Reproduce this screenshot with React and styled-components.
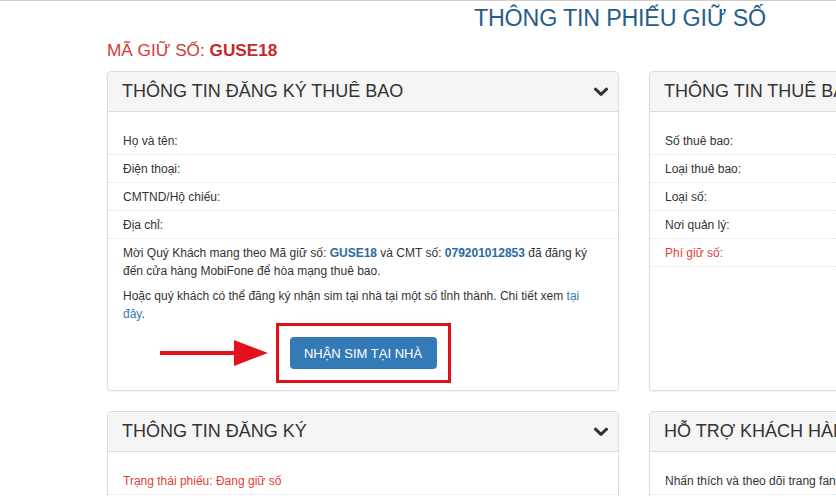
import React from "react";
import styled, { createGlobalStyle } from "styled-components";

const Global = createGlobalStyle`
  html, body { margin: 0; padding: 0; background: #fff; }
  body {
    font-family: "Liberation Sans", Arial, sans-serif;
    color: #333;
    overflow: hidden;
    width: 836px;
    height: 496px;
    border-top: 1px solid #cfcfcf;
    box-sizing: border-box;
  }
`;

const Page = styled.div`
  padding-left: 107px;
  width: 1200px;
`;

const Title = styled.h1`
  margin: 0;
  width: 1026px;
  padding-top: 4px;
  text-align: center;
  font-size: 23.3px;
  font-weight: normal;
  color: #255d8c;
  line-height: 26px;
  letter-spacing: -0.2px;
`;

const Code = styled.div`
  margin-top: 10px;
  font-size: 17.2px;
  line-height: 18px;
  color: #d33a36;
  letter-spacing: 0;
  b { color: #c8282a; }
`;

const Grid = styled.div`
  margin-top: 12px;
  display: grid;
  grid-template-columns: 512px 512px;
  column-gap: 30px;
  row-gap: 20px;
`;

const Panel = styled.section`
  border: 1px solid #ddd;
  border-radius: 4px;
  box-shadow: 0 1px 2px rgba(0,0,0,0.06);
  background: #fff;
  overflow: hidden;
`;

const Head = styled.div`
  height: 39px;
  background: #f5f5f5;
  border-bottom: 1px solid #ddd;
  display: flex;
  align-items: center;
  justify-content: space-between;
  padding: 0 10px 0 14px;
`;

const HeadTitle = styled.h3`
  margin: 0;
  font-size: 18px;
  font-weight: normal;
  color: #333;
  letter-spacing: 0;
  white-space: nowrap;
`;

const Body = styled.div`
  padding: 15px 0 7px;
`;

const Row = styled.div`
  height: 27px;
  border-bottom: 1px dotted #e2e2e2;
  display: flex;
  align-items: center;
  padding: 0 15px;
  font-size: 12px;
  color: ${(p) => (p.$red ? "#e0403c" : "#333")};
  white-space: nowrap;
`;

const Para = styled.p`
  margin: ${(p) => p.$m || "0"};
  padding: 0 15px;
  font-size: 12px;
  line-height: 17.5px;
  color: #333;
  b { color: #2a6aa3; }
  a { color: #337ab7; text-decoration: none; }
`;

const Action = styled.div`
  position: relative;
  display: flex;
  justify-content: center;
`;

const RedBox = styled.div`
  border: 3px solid #de0f17;
  padding: 11px;
`;

const Button = styled.button`
  width: 147px;
  height: 32px;
  border: none;
  border-radius: 4px;
  background: #337ab7;
  color: #fff;
  font-family: "Liberation Sans", Arial, sans-serif;
  font-size: 13px;
  padding: 0;
`;

const Arrow = styled.svg`
  position: absolute;
  left: 52px;
  top: 15px;
`;

const Chevron = () => (
  <svg width="14" height="10" viewBox="0 0 14 10">
    <path d="M1.5 2.2 L7 7.4 L12.5 2.2" fill="none" stroke="#333" strokeWidth="3" strokeLinecap="round" strokeLinejoin="round" />
  </svg>
);

export default function App() {
  return (
    <>
      <Global />
      <Page>
        <Title>THÔNG TIN PHIẾU GIỮ SỐ</Title>
        <Code>MÃ GIỮ SỐ: <b>GUSE18</b></Code>
        <Grid>
          <Panel>
            <Head>
              <HeadTitle>THÔNG TIN ĐĂNG KÝ THUÊ BAO</HeadTitle>
              <Chevron />
            </Head>
            <Body>
              <Row>Họ và tên:</Row>
              <Row>Điện thoại:</Row>
              <Row>CMTND/Hộ chiếu:</Row>
              <Row>Địa chỉ:</Row>
              <Para $m="6px 0 0">
                Mời Quý Khách mang theo Mã giữ số: <b>GUSE18</b> và CMT số: <b>079201012853</b> đã đăng ký đến cửa hàng MobiFone để hòa mạng thuê bao.
              </Para>
              <Para $m="8px 0 0">
                Hoặc quý khách có thể đăng ký nhận sim tại nhà tại một số tỉnh thành. Chi tiết xem <a href="#">tại đây</a>.
              </Para>
              <Action>
                <Arrow width="110" height="30" viewBox="0 0 110 30">
                  <path d="M0 13 L78 13 L78 17 L0 17 Z" fill="#e3111b" />
                  <path d="M74 2 L108 15 L74 28 Z" fill="#e3111b" />
                </Arrow>
                <RedBox>
                  <Button>NHẬN SIM TẠI NHÀ</Button>
                </RedBox>
              </Action>
            </Body>
          </Panel>
          <Panel>
            <Head>
              <HeadTitle>THÔNG TIN THUÊ BAO</HeadTitle>
              <Chevron />
            </Head>
            <Body>
              <Row>Số thuê bao:</Row>
              <Row>Loại thuê bao:</Row>
              <Row>Loại số:</Row>
              <Row>Nơi quản lý:</Row>
              <Row $red>Phí giữ số:</Row>
            </Body>
          </Panel>
          <Panel>
            <Head>
              <HeadTitle>THÔNG TIN ĐĂNG KÝ</HeadTitle>
              <Chevron />
            </Head>
            <Body>
              <Row $red>Trạng thái phiếu: Đang giữ số</Row>
              <Row>Ngày giữ số:</Row>
            </Body>
          </Panel>
          <Panel>
            <Head>
              <HeadTitle>HỖ TRỢ KHÁCH HÀNG</HeadTitle>
            </Head>
            <Body>
              <Row>Nhấn thích và theo dõi trang fanpage MobiFone</Row>
            </Body>
          </Panel>
        </Grid>
      </Page>
    </>
  );
}
